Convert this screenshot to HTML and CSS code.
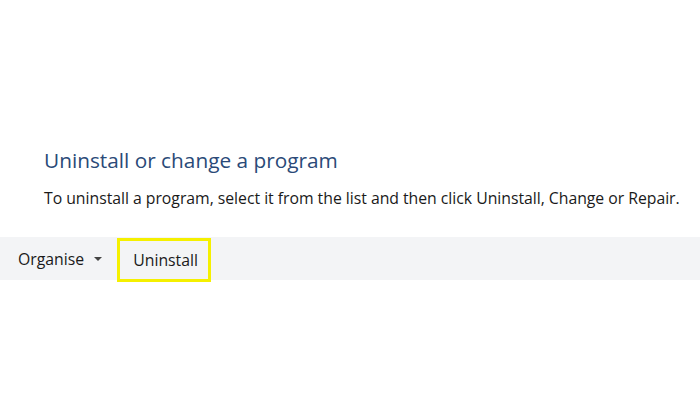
FILE: index.html
```html
<!DOCTYPE html>
<html lang="en">
<head>
    <meta charset="UTF-8">
    <title>Programs and Features</title>
    <link rel="stylesheet" href="styles.css">
</head>
<body>
    <div class="page">
        <div class="header">
            <h1>Uninstall or change a program</h1>
            <p>To uninstall a program, select it from the list and then click Uninstall, Change or Repair.</p>
        </div>
        <div class="toolbar">
            <button class="tool organise">Organise <span class="caret"></span></button>
            <button class="tool uninstall">Uninstall</button>
        </div>
    </div>
</body>
</html>
```

FILE: styles.css
```css
body {
    margin: 0;
    background: #fff;
    font-family: 'Open Sans', 'Noto Sans', sans-serif;
    color: #1a1a1a;
}

.page {
    width: 700px;
    height: 400px;
    padding-top: 145px;
    box-sizing: border-box;
}

.header {
    padding-left: 44px;
}

h1 {
    margin: 0;
    font-size: 20.8px;
    font-weight: 400;
    color: #2a4a78;
    line-height: 30px;
}

p {
    margin: 13px 0 0;
    font-size: 15.8px;
    line-height: 20px;
    letter-spacing: -0.03px;
}

.toolbar {
    margin-top: 29px;
    height: 43px;
    background: #f3f4f6;
    display: flex;
    align-items: flex-start;
    padding-left: 9px;
}

.tool {
    font-family: inherit;
    font-size: 15.8px;
    color: #1a1a1a;
    background: none;
    border: none;
    padding: 0 9px;
    height: 43px;
    display: flex;
    align-items: center;
    gap: 10px;
}

.caret {
    width: 0;
    height: 0;
    border-left: 4px solid transparent;
    border-right: 4px solid transparent;
    border-top: 4px solid #444;
}

.uninstall {
    margin-left: 6px;
    margin-top: 1px;
    padding: 0 10px 0 13px;
    border: 3px solid #f5f000;
    height: 44px;
    box-sizing: border-box;
}
```
